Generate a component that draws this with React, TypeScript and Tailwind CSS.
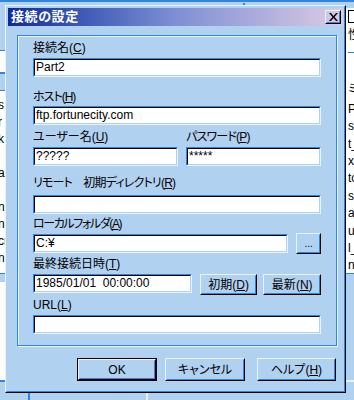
const face = "bg-[#b1d1f1]";

function Sunken({ className = "", children }: { className?: string; children?: React.ReactNode }) {
  return (
    <div
      className={`border border-t-[#2f86e0] border-l-[#2f86e0] border-b-[#e8f3ff] border-r-[#e8f3ff] ${className}`}
    >
      <div className="h-full border border-t-black border-l-black border-b-[#b1d1f1] border-r-[#b1d1f1] bg-white px-[1px] text-[12px] leading-[15px] whitespace-nowrap overflow-hidden">
        {children}
      </div>
    </div>
  );
}

function Btn({
  className = "",
  children,
  primary = false,
}: {
  className?: string;
  children: React.ReactNode;
  primary?: boolean;
}) {
  const inner = (
    <div className="h-full border border-t-[#e8f3ff] border-l-[#e8f3ff] border-b-black border-r-black">
      <div className="h-full flex items-center justify-center border border-t-[#b1d1f1] border-l-[#b1d1f1] border-b-[#2f86e0] border-r-[#2f86e0] text-[12px]">
        {children}
      </div>
    </div>
  );
  if (primary) return <div className={`border border-black ${className}`}>{inner}</div>;
  return <div className={className}>{inner}</div>;
}

function Acc({ label, k }: { label: string; k: string }) {
  return (
    <span>
      {label}(<span className="underline underline-offset-1">{k}</span>)
    </span>
  );
}

function Label({ className = "", children }: { className?: string; children: React.ReactNode }) {
  return <div className={`h-[14px] text-[12px] leading-[14px] whitespace-nowrap ${className}`}>{children}</div>;
}

export default function App() {
  return (
    <div
      className={`relative w-[354px] h-[400px] overflow-hidden ${face} text-black font-['Liberation_Sans','Noto_Sans_CJK_JP',sans-serif] [font-feature-settings:'palt']`}
    >
      {/* background windows */}
      <div className="absolute left-0 top-0 w-full h-[2px] bg-[#2f86e0]" />
      <div className="absolute left-[243px] top-[3px] w-[2px] h-[2px] bg-[#2f86e0]" />
      <div className="absolute left-[-40px] top-[50px] w-[46px] h-[24px] border-t border-[#2f86e0] bg-white border-b-2 border-b-[#2f86e0]" />
      <div className="absolute left-[-40px] top-[90px] w-[46px] h-[184px] bg-white border-y border-[#2f86e0] text-[12px] leading-[17px] pl-[38px] pt-[6px]">
        <div>s</div>
        <div>r</div>
        <div>k</div>
        <div>&nbsp;</div>
        <div>al</div>
        <div>&nbsp;</div>
        <div>n</div>
        <div>nt</div>
        <div>cr</div>
        <div>nl</div>
      </div>
      <div className="absolute left-[-40px] top-[282px] w-[46px] h-[100px] bg-white border-b-2 border-[#2f86e0]" />
      <div className="absolute left-0 top-[392px] w-full h-[8px] flex">
        <div className="ml-[28px] w-[2px] h-full bg-[#2f86e0]" />
        <div className="ml-[116px] w-[2px] h-full bg-[#e8f3ff]" />
      </div>

      <div className="absolute left-[345px] top-[8px] w-[40px] h-[266px] bg-white border-l border-black border-b border-b-[#2f86e0] text-[12px] leading-[17.4px] pl-[2px]">
        <div className="mt-[2px] w-[9px] h-[13px] border border-black bg-white" />
        <div className="mt-[4px]">性</div>
        <div className="mt-[8px] h-[1px] bg-[#2f86e0]" />
        <div className="mt-[28px]">ミ</div>
        <div className="mt-[2px]">Pr</div>
        <div>sc</div>
        <div>t_</div>
        <div>x</div>
        <div>to</div>
        <div>sc</div>
        <div>ak</div>
        <div>u</div>
        <div>l_</div>
        <div>np</div>
      </div>
      <div className="absolute left-[346px] top-[380px] w-[10px] h-[2px] bg-[#e8f3ff]" />

      {/* dialog */}
      <div className="absolute left-[5px] top-[5px] w-[341px] h-[388px] border border-t-[#e8f3ff] border-l-[#e8f3ff] border-b-black border-r-black">
        <div className={`h-full border border-t-[#b1d1f1] border-l-[#b1d1f1] border-b-[#2f86e0] border-r-[#2f86e0] ${face} p-[1px] flex flex-col`}>
          <div className="h-[18px] flex items-center justify-between bg-linear-to-r from-[#0e2a9c] via-[#7f8fd4] to-[#dccbe2] pl-[3px] pr-[2px]">
            <span className="text-white font-bold text-[13px] leading-[16px] tracking-[0.6px]">接続の設定</span>
            <Btn className="w-[16px] h-[14px]">
              <svg width="9" height="8" viewBox="0 0 9 8">
                <path d="M0 0h2l2.5 3 2.5-3h2l-3.5 4 3.5 4h-2l-2.5-3-2.5 3h-2l3.5-4z" fill="black" />
              </svg>
            </Btn>
          </div>

          <div className="mt-[9px] ml-[9px] w-[320px] h-[311px] border border-[#2f86e0] shadow-[inset_1px_1px_0_#e8f3ff,1px_1px_0_#e8f3ff] pl-[15px] pr-[15px] pt-[5px]">
            <Label>
              <Acc label="接続名" k="C" />
            </Label>
            <Sunken className="mt-[3px] h-[19px]">Part2</Sunken>

            <Label className="mt-[13px] tracking-[-1px]">
              <Acc label="ホスト" k="H" />
            </Label>
            <Sunken className="mt-[2px] h-[19px]">ftp.fortunecity.com</Sunken>

            <div className="mt-[5px] flex gap-[8px]">
              <div className="w-[145px]">
                <Label>
                  <Acc label="ユーザー名" k="U" />
                </Label>
                <Sunken className="mt-[3px] h-[19px]">?????</Sunken>
              </div>
              <div className="flex-1">
                <Label className="tracking-[-0.8px]">
                  <Acc label="パスワード" k="P" />
                </Label>
                <Sunken className="mt-[3px] h-[19px]">*****</Sunken>
              </div>
            </div>

            <Label className="mt-[10px] tracking-[-0.8px]">
              リモート　初期ディレクトリ(<span className="underline underline-offset-1">R</span>)
            </Label>
            <Sunken className="mt-[5px] h-[19px]" />

            <Label className="mt-[3px] tracking-[-1.4px]">
              <Acc label="ローカルフォルダ" k="A" />
            </Label>
            <div className="mt-[2px] flex gap-[8px] items-start">
              <Sunken className="mt-[1px] w-[257px] h-[19px]">C:¥</Sunken>
              <Btn className="w-[25px] h-[21px]">
                <span className="text-[10px] leading-[10px]">...</span>
              </Btn>
            </div>

            <Label className="mt-[3px]">
              <Acc label="最終接続日時" k="T" />
            </Label>
            <div className="mt-[3px] flex items-start">
              <Sunken className="w-[160px] h-[19px]">1985/01/01&nbsp; 00:00:00</Sunken>
              <Btn className="ml-[8px] w-[58px] h-[21px]">
                <Acc label="初期" k="D" />
              </Btn>
              <Btn className="ml-[6px] w-[58px] h-[21px]">
                <Acc label="最新" k="N" />
              </Btn>
            </div>

            <Label className="mt-[3px]">
              <Acc label="URL" k="L" />
            </Label>
            <Sunken className="mt-[3px] h-[19px]" />
          </div>

          <div className="mt-[12px] flex pl-[69px]">
            <Btn primary className="w-[80px] h-[23px]">
              OK
            </Btn>
            <Btn className="ml-[8px] w-[80px] h-[23px]">キャンセル</Btn>
            <Btn className="ml-[12px] w-[79px] h-[23px]">
              <Acc label="ヘルプ" k="H" />
            </Btn>
          </div>
        </div>
      </div>
    </div>
  );
}
